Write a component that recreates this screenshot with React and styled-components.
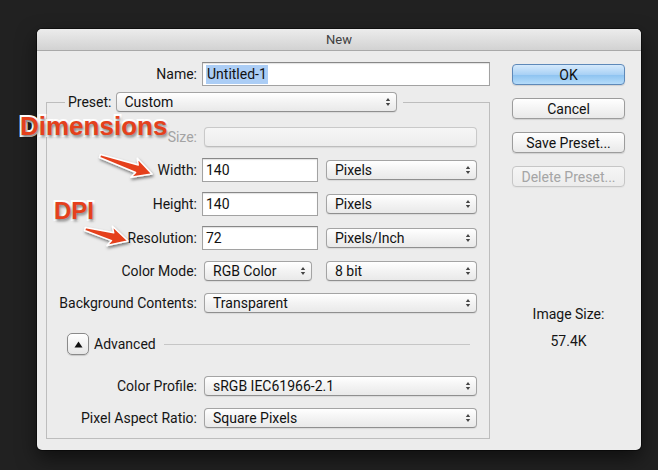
import React from 'react';
import styled, { createGlobalStyle } from 'styled-components';

const Global = createGlobalStyle`
  html, body { margin: 0; padding: 0; background: #212121; }
  body {
    width: 658px; height: 470px; overflow: hidden;
    font-family: Roboto, "Liberation Sans", sans-serif;
    -webkit-font-smoothing: antialiased;
  }
  * { box-sizing: border-box; }
`;

const Page = styled.div`
  position: relative;
  width: 658px;
  height: 470px;
  padding: 29px 0 0 37px;
`;

const Dialog = styled.div`
  width: 604px;
  height: 421px;
  background: #ececec;
  border-radius: 5px;
  box-shadow: 0 0 0 1px rgba(0, 0, 0, 0.45), 0 8px 20px rgba(0, 0, 0, 0.55);
  overflow: hidden;
  display: flex;
  flex-direction: column;
`;

const TitleBar = styled.div`
  height: 22px;
  flex: none;
  background: linear-gradient(#ececec, #d2d2d2);
  border-bottom: 1px solid #a9a9a9;
  display: flex;
  align-items: center;
  justify-content: center;
  font-size: 13px;
  color: #404040;
`;

const Body = styled.div`
  display: flex;
  gap: 22px;
  padding: 11px 16px 0 9px;
`;

const LeftCol = styled.div`
  width: 444px;
  display: flex;
  flex-direction: column;
`;

const NameRow = styled.div`
  display: grid;
  grid-template-columns: 151px 288px;
  column-gap: 5px;
  align-items: center;
  height: 24px;
`;

const Label = styled.div`
  text-align: right;
  font-size: 14px;
  color: ${(p) => (p.$muted ? '#a3a3a3' : '#151515')};
  white-space: nowrap;
`;

const TextField = styled.div`
  height: 24px;
  width: ${(p) => p.$w || 'auto'};
  background: #fff;
  border: 1px solid #a2a2a2;
  border-top-color: #888;
  box-shadow: inset 0 1px 1px rgba(0, 0, 0, 0.12);
  display: flex;
  align-items: center;
  padding-left: 3px;
  font-size: 14px;
  color: #111;
`;

const Selected = styled.span`
  background: #abcdf5;
  padding: 1px 1px;
  line-height: 17px;
`;

const Group = styled.fieldset`
  margin: 6px 0 0 0;
  padding: 13px 12px 8px 0;
  border: 1px solid #bdbdbd;
  min-width: 0;
  width: 444px;
`;

const Legend = styled.legend`
  margin-left: 18px;
  padding: 0 6px 0 3px;
  display: flex;
  align-items: center;
  gap: 2px;
  height: 20px;
  font-size: 14px;
  color: #151515;
`;

const SelectBox = styled.div`
  flex: none;
  margin-left: 2px;
  width: ${(p) => p.$w}px;
  height: 20px;
  border: 1px solid ${(p) => (p.$disabled ? '#c9c9c9' : '#a4a4a4')};
  border-bottom-color: ${(p) => (p.$disabled ? '#bdbdbd' : '#8f8f8f')};
  border-radius: 4px;
  background: ${(p) =>
    p.$disabled
      ? 'linear-gradient(#f6f6f6, #ededed)'
      : 'linear-gradient(#ffffff, #f3f3f3 50%, #e9e9e9)'};
  box-shadow: 0 1px 1px rgba(0, 0, 0, 0.08);
  display: flex;
  align-items: center;
  justify-content: space-between;
  padding: 0 5px 0 8px;
  font-size: 14px;
  color: #111;
  white-space: nowrap;
`;

const Arrows = styled.svg`
  flex: none;
  opacity: ${(p) => (p.$disabled ? 0 : 1)};
`;

const Select = ({ w, children, disabled }) => (
  <SelectBox $w={w} $disabled={disabled}>
    <span>{children}</span>
    <Arrows $disabled={disabled} width="6" height="10" viewBox="0 0 6 10">
      <path d="M0.8 4 L3 1 L5.2 4 Z M0.8 6 L3 9 L5.2 6 Z" fill="#444" />
    </Arrows>
  </SelectBox>
);

const FormRow = styled.div`
  display: grid;
  grid-template-columns: 150px 275px;
  column-gap: 5px;
  align-items: center;
  height: 24px;
  margin-top: ${(p) => p.$top || 0}px;
`;

const Controls = styled.div`
  display: flex;
  align-items: center;
  gap: ${(p) => p.$gap || 0}px;
`;

const AdvancedRow = styled.div`
  display: flex;
  align-items: center;
  height: 24px;
  margin-top: ${(p) => p.$top || 0}px;
  padding-left: 20px;
  font-size: 14px;
  color: #151515;
`;

const Disclosure = styled.div`
  width: 22px;
  height: 22px;
  border: 1px solid #8a8a8a;
  border-radius: 5px;
  background: linear-gradient(#ffffff, #e6e6e6);
  box-shadow: 0 1px 1px rgba(0, 0, 0, 0.15);
  display: flex;
  align-items: center;
  justify-content: center;
  margin-right: 5px;
`;

const Rule = styled.div`
  flex: 1;
  height: 1px;
  background: #c6c6c6;
  margin: 0 7px 0 8px;
`;

const RightCol = styled.div`
  width: 113px;
  padding-top: 2px;
  display: flex;
  flex-direction: column;
  gap: 13px;
`;

const Button = styled.div`
  height: 21px;
  border-radius: 4px;
  display: flex;
  align-items: center;
  justify-content: center;
  font-size: 14px;
  color: ${(p) => (p.$disabled ? '#a5a5a5' : '#111')};
  border: 1px solid ${(p) => (p.$primary ? '#5e89b9' : p.$disabled ? '#c6c6c6' : '#9c9c9c')};
  background: ${(p) =>
    p.$primary
      ? 'linear-gradient(#d6eafc, #a9d1f5 50%, #8cc2f0 51%, #b5dcfa)'
      : p.$disabled
      ? 'linear-gradient(#f5f5f5, #ececec)'
      : 'linear-gradient(#ffffff, #f4f4f4 50%, #e9e9e9)'};
  box-shadow: 0 1px 1px rgba(0, 0, 0, ${(p) => (p.$disabled ? 0.04 : 0.12)});
`;

const ImageSize = styled.div`
  margin-top: 105px;
  display: flex;
  flex-direction: column;
  align-items: center;
  gap: 9px;
  font-size: 14px;
  line-height: 18px;
  color: #151515;
`;

const Callout = styled.div`
  position: absolute;
  left: ${(p) => p.$x}px;
  top: ${(p) => p.$y}px;
  font-family: "Liberation Sans", Arial, sans-serif;
  font-weight: bold;
  font-size: ${(p) => p.$size}px;
  line-height: 1;
  color: #e5401c;
  -webkit-text-stroke: 4px #ffffff;
  paint-order: stroke fill;
  text-shadow: 1px 2px 3px rgba(0, 0, 0, 0.55);
  white-space: nowrap;
`;

const Overlay = styled.svg`
  position: absolute;
  left: 0;
  top: 0;
  pointer-events: none;
`;

const arrowPoints = (x1, y1, x2, y2) => {
  const dx = x2 - x1;
  const dy = y2 - y1;
  const L = Math.hypot(dx, dy);
  const c = dx / L;
  const s = dy / L;
  const local = [
    [0, -1.6],
    [L - 16, -4],
    [L - 19, -10],
    [L, 0],
    [L - 19, 10],
    [L - 16, 4],
    [0, 1.6],
  ];
  return local
    .map(([u, v]) => `${(x1 + u * c - v * s).toFixed(1)},${(y1 + u * s + v * c).toFixed(1)}`)
    .join(' ');
};

const arrows = [
  [100, 156, 152, 174],
  [85, 229, 128, 241],
];

export default function App() {
  return (
    <Page>
      <Global />
      <Dialog>
        <TitleBar>New</TitleBar>
        <Body>
          <LeftCol>
            <NameRow>
              <Label>Name:</Label>
              <TextField>
                <Selected>Untitled-1</Selected>
              </TextField>
            </NameRow>
            <Group>
              <Legend>
                <span>Preset:</span>
                <Select w={281}>Custom</Select>
              </Legend>
              <FormRow>
                <Label $muted>Size:</Label>
                <Controls>
                  <Select w={273} disabled />
                </Controls>
              </FormRow>
              <FormRow $top={9}>
                <Label>Width:</Label>
                <Controls $gap={6}>
                  <TextField $w="116px">140</TextField>
                  <Select w={151}>Pixels</Select>
                </Controls>
              </FormRow>
              <FormRow $top={10}>
                <Label>Height:</Label>
                <Controls $gap={6}>
                  <TextField $w="116px">140</TextField>
                  <Select w={151}>Pixels</Select>
                </Controls>
              </FormRow>
              <FormRow $top={10}>
                <Label>Resolution:</Label>
                <Controls $gap={6}>
                  <TextField $w="116px">72</TextField>
                  <Select w={151}>Pixels/Inch</Select>
                </Controls>
              </FormRow>
              <FormRow $top={9}>
                <Label>Color Mode:</Label>
                <Controls $gap={12}>
                  <Select w={108}>RGB Color</Select>
                  <Select w={151}>8 bit</Select>
                </Controls>
              </FormRow>
              <FormRow $top={8}>
                <Label>Background Contents:</Label>
                <Controls>
                  <Select w={273}>Transparent</Select>
                </Controls>
              </FormRow>
              <AdvancedRow $top={17}>
                <Disclosure>
                  <svg width="9" height="7" viewBox="0 0 9 7">
                    <path d="M0.5 6.5 L4.5 0.5 L8.5 6.5 Z" fill="#111" />
                  </svg>
                </Disclosure>
                <span>Advanced</span>
                <Rule />
              </AdvancedRow>
              <FormRow $top={18}>
                <Label>Color Profile:</Label>
                <Controls>
                  <Select w={273}>sRGB IEC61966-2.1</Select>
                </Controls>
              </FormRow>
              <FormRow $top={8}>
                <Label>Pixel Aspect Ratio:</Label>
                <Controls>
                  <Select w={273}>Square Pixels</Select>
                </Controls>
              </FormRow>
            </Group>
          </LeftCol>
          <RightCol>
            <Button $primary>OK</Button>
            <Button>Cancel</Button>
            <Button>Save Preset...</Button>
            <Button $disabled>Delete Preset...</Button>
            <ImageSize>
              <span>Image Size:</span>
              <span>57.4K</span>
            </ImageSize>
          </RightCol>
        </Body>
      </Dialog>

      <Overlay width="658" height="470" viewBox="0 0 658 470">
        <defs>
          <filter id="arrowShadow" x="-20%" y="-50%" width="140%" height="200%">
            <feDropShadow dx="1" dy="2" stdDeviation="1.5" floodColor="#000" floodOpacity="0.5" />
          </filter>
        </defs>
        {arrows.map((a, i) => (
          <polygon
            key={i}
            points={arrowPoints(...a)}
            fill="#e5401c"
            stroke="#ffffff"
            strokeWidth="1.5"
            strokeLinejoin="round"
            filter="url(#arrowShadow)"
          />
        ))}
      </Overlay>
      <Callout $x={20} $y={113} $size={26}>Dimensions</Callout>
      <Callout $x={54} $y={199} $size={24}>DPI</Callout>
    </Page>
  );
}
